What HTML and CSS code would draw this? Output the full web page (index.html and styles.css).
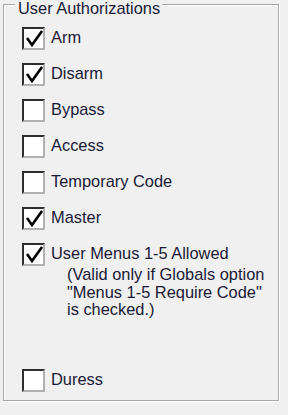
FILE: index.html
```html
<!DOCTYPE html>
<html lang="en">
<head>
    <meta charset="UTF-8">
    <title>User Authorizations</title>
    <link rel="stylesheet" href="styles.css">
</head>
<body>
    <div class="page">
        <div class="group-box">
            <span class="group-title">User Authorizations</span>

            <div class="options">
                <label class="option">
                    <span class="check checked"><svg viewBox="0 0 19 19"><polyline points="3,9 8,16 18,2"></polyline></svg></span>
                    <span class="option-text">Arm</span>
                </label>
                <label class="option">
                    <span class="check checked"><svg viewBox="0 0 19 19"><polyline points="3,9 8,16 18,2"></polyline></svg></span>
                    <span class="option-text">Disarm</span>
                </label>
                <label class="option">
                    <span class="check"></span>
                    <span class="option-text">Bypass</span>
                </label>
                <label class="option">
                    <span class="check"></span>
                    <span class="option-text">Access</span>
                </label>
                <label class="option">
                    <span class="check"></span>
                    <span class="option-text">Temporary Code</span>
                </label>
                <label class="option">
                    <span class="check checked"><svg viewBox="0 0 19 19"><polyline points="3,9 8,16 18,2"></polyline></svg></span>
                    <span class="option-text">Master</span>
                </label>
                <label class="option">
                    <span class="check checked"><svg viewBox="0 0 19 19"><polyline points="3,9 8,16 18,2"></polyline></svg></span>
                    <span class="option-text">
                        User Menus 1-5 Allowed
                        <span class="option-note">(Valid only if Globals option "Menus 1-5 Require Code" is checked.)</span>
                    </span>
                </label>
            </div>

            <label class="option option-last">
                <span class="check"></span>
                <span class="option-text">Duress</span>
            </label>
        </div>
    </div>
</body>
</html>
```

FILE: styles.css
```css
* {
    margin: 0;
    padding: 0;
    box-sizing: border-box;
}

body {
    width: 288px;
    height: 415px;
    background: #f0f0f0;
    font-family: "Liberation Sans", Arial, sans-serif;
    font-size: 16.4px;
    color: #1a1a36;
    overflow: hidden;
}

.page {
    padding: 4px 0 0 3px;
}

.group-box {
    position: relative;
    width: 276px;
    height: 397px;
    border: 1px solid #a6a6a6;
    box-shadow: inset 1px 1px 0 #fff, 1px 1px 0 #fff;
    padding: 22px 0 8px 18px;
    display: flex;
    flex-direction: column;
}

.group-title {
    position: absolute;
    top: -5px;
    left: 11px;
    padding: 0 2px 0 3px;
    line-height: 16px;
    background: #f0f0f0;
}

.options {
    display: flex;
    flex-direction: column;
    gap: 13px;
}

.option {
    display: flex;
    align-items: flex-start;
    gap: 6px;
}

.option-last {
    margin-top: auto;
}

.check {
    flex: none;
    width: 23px;
    height: 23px;
    background: #fff;
    border-style: solid;
    border-width: 2px;
    border-color: #2e2e2e #b0b0b0 #b0b0b0 #2e2e2e;
}

.check svg {
    display: block;
    width: 19px;
    height: 19px;
    overflow: visible;
}

.check svg polyline {
    fill: none;
    stroke: #000;
    stroke-width: 2.6;
    stroke-linecap: butt;
    stroke-linejoin: miter;
}

.option-text {
    line-height: 21px;
}

.option-note {
    display: block;
    margin: 2px 0 0 16px;
    line-height: 17.5px;
    width: 200px;
}
```
